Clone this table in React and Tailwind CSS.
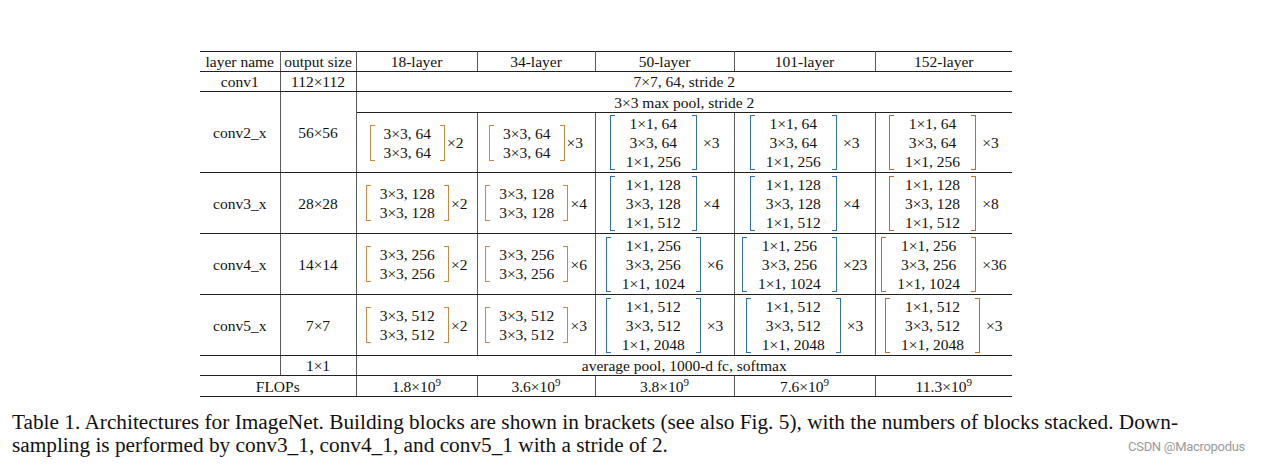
import React from "react";

const serif = { fontFamily: '"Liberation Serif", "Times New Roman", serif' };

const COLORS = {
  orange: "border-[#c9873f]",
  blue: "border-[#2f6fba]",
  brown: "border-[#b86f2a]",
};

function Block({ lines, mult, color }) {
  const three = lines.length === 3;
  const c = COLORS[color];
  return (
    <div className="flex items-center justify-center">
      <div className={`w-[5px] self-stretch border-l border-t border-b ${c} my-[1px]`} />
      <div className={`flex flex-col items-center leading-[19px] ${three ? "px-[11px]" : "px-[9px]"}`}>
        {lines.map((l, i) => (
          <span key={i} className="whitespace-nowrap">{l}</span>
        ))}
      </div>
      <div className={`w-[5px] self-stretch border-r border-t border-b ${c} my-[1px]`} />
      <span className={three ? "ml-[6px]" : "ml-[2px]"}>×{mult}</span>
    </div>
  );
}

const two = (n) => [`3×3, ${n}`, `3×3, ${n}`];
const bott = (a, b) => [`1×1, ${a}`, `3×3, ${a}`, `1×1, ${b}`];

const stages = [
  { name: "conv3_x", size: "28×28", b: [two(128), two(128), bott(128, 512), bott(128, 512), bott(128, 512)], m: [2, 4, 4, 4, 8], h: "h-[61px]" },
  { name: "conv4_x", size: "14×14", b: [two(256), two(256), bott(256, 1024), bott(256, 1024), bott(256, 1024)], m: [2, 6, 6, 23, 36], h: "h-[61px]" },
  { name: "conv5_x", size: "7×7", b: [two(512), two(512), bott(512, 2048), bott(512, 2048), bott(512, 2048)], m: [2, 3, 3, 3, 3], h: "h-[61px]" },
];

const colColors = ["orange", "orange", "blue", "blue", "brown"];

const cell = "p-0 border border-y-[#222] border-x-[#5a5a5a] text-center align-middle";
const first = "border-l-0";
const last = "border-r-0";

export default function App() {
  return (
    <div className="w-[1262px] h-[466px] bg-white text-[#111] overflow-hidden" style={serif}>
      <div className="pl-[200px] pt-[51px]">
        <table className="table-fixed w-[812px] border-collapse text-[15.5px] leading-[19px]">
          <colgroup>
            <col className="w-[80px]" />
            <col className="w-[76px]" />
            <col className="w-[121px]" />
            <col className="w-[118px]" />
            <col className="w-[139px]" />
            <col className="w-[141px]" />
            <col className="w-[137px]" />
          </colgroup>
          <tbody>
            <tr className="h-[20px]">
              <td className={`${cell} ${first}`}>layer name</td>
              <td className={cell}>output size</td>
              <td className={cell}>18-layer</td>
              <td className={cell}>34-layer</td>
              <td className={cell}>50-layer</td>
              <td className={cell}>101-layer</td>
              <td className={`${cell} ${last}`}>152-layer</td>
            </tr>
            <tr className="h-[20px]">
              <td className={`${cell} ${first}`}>conv1</td>
              <td className={cell}>112×112</td>
              <td className={`${cell} ${last}`} colSpan={5}>7×7, 64, stride 2</td>
            </tr>
            <tr className="h-[21px]">
              <td className={`${cell} ${first}`} rowSpan={2}>conv2_x</td>
              <td className={cell} rowSpan={2}>56×56</td>
              <td className={`${cell} ${last}`} colSpan={5}>3×3 max pool, stride 2</td>
            </tr>
            <tr className="h-[60px]">
              {[two(64), two(64), bott(64, 256), bott(64, 256), bott(64, 256)].map((b, i) => (
                <td key={i} className={`${cell} ${i === 4 ? last : ""}`}>
                  <Block lines={b} mult={[2, 3, 3, 3, 3][i]} color={colColors[i]} />
                </td>
              ))}
            </tr>
            {stages.map((s) => (
              <tr key={s.name} className={s.h}>
                <td className={`${cell} ${first}`}>{s.name}</td>
                <td className={cell}>{s.size}</td>
                {s.b.map((b, i) => (
                  <td key={i} className={`${cell} ${i === 4 ? last : ""}`}>
                    <Block lines={b} mult={s.m[i]} color={colColors[i]} />
                  </td>
                ))}
              </tr>
            ))}
            <tr className="h-[19px]">
              <td className={`${cell} ${first}`}></td>
              <td className={cell}>1×1</td>
              <td className={`${cell} ${last}`} colSpan={5}>average pool, 1000-d fc, softmax</td>
            </tr>
            <tr className="h-[21px]">
              <td className={`${cell} ${first}`} colSpan={2}>FLOPs</td>
              {["1.8", "3.6", "3.8", "7.6", "11.3"].map((f, i) => (
                <td key={i} className={`${cell} ${i === 4 ? last : ""}`}>
                  {f}×10<sup className="text-[11px] relative -top-[6px]">9</sup>
                </td>
              ))}
            </tr>
          </tbody>
        </table>
      </div>
      <div className="pl-[12px] pt-[14px] text-[21.3px] leading-[23px] pr-[17px]">
        <div className="whitespace-nowrap">
          Table 1. Architectures for ImageNet. Building blocks are shown in brackets (see also Fig. 5), with the numbers of blocks stacked. Down-
        </div>
        <div className="flex items-end justify-between">
          <span className="whitespace-nowrap">sampling is performed by conv3_1, conv4_1, and conv5_1 with a stride of 2.</span>
          <span
            className="text-[13px] leading-[18px] text-[#9a9a9a] tracking-[-0.3px] mb-[1px]"
            style={{ fontFamily: 'Roboto, "Liberation Sans", sans-serif' }}
          >
            CSDN @Macropodus
          </span>
        </div>
      </div>
    </div>
  );
}
